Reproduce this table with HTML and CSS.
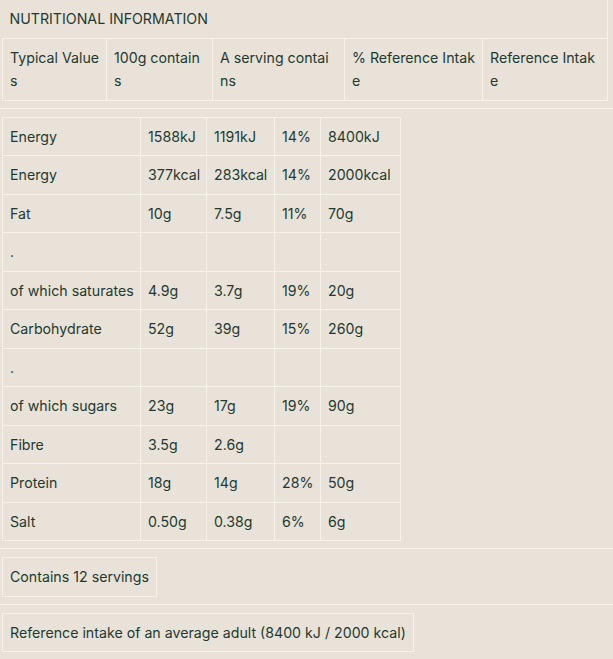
FILE: index.html
```html
<!DOCTYPE html>
<html lang="en">
<head>
<meta charset="utf-8">
<title>Nutritional information</title>
<link rel="stylesheet" href="styles.css">
</head>
<body>
<section class="block first">
  <table class="t1">
    <colgroup><col class="c1"><col class="c2"><col class="c3"><col class="c4"><col class="c5"></colgroup>
    <tr><th colspan="5" class="title">NUTRITIONAL INFORMATION</th></tr>
    <tr class="head">
      <td class="h1">Typical Values</td>
      <td>100g contains</td>
      <td>A serving contains</td>
      <td>% Reference Intake</td>
      <td>Reference Intake</td>
    </tr>
  </table>
</section>
<section class="block">
  <table class="t2">
    <colgroup><col class="d1"><col class="d2"><col class="d3"><col class="d4"><col class="d5"></colgroup>
    <tr><td>Energy</td><td>1588kJ</td><td>1191kJ</td><td>14%</td><td>8400kJ</td></tr>
    <tr><td>Energy</td><td>377kcal</td><td>283kcal</td><td>14%</td><td>2000kcal</td></tr>
    <tr><td>Fat</td><td>10g</td><td>7.5g</td><td>11%</td><td>70g</td></tr>
    <tr><td>.</td><td></td><td></td><td></td><td></td></tr>
    <tr><td>of which saturates</td><td>4.9g</td><td>3.7g</td><td>19%</td><td>20g</td></tr>
    <tr><td>Carbohydrate</td><td>52g</td><td>39g</td><td>15%</td><td>260g</td></tr>
    <tr><td>.</td><td></td><td></td><td></td><td></td></tr>
    <tr><td>of which sugars</td><td>23g</td><td>17g</td><td>19%</td><td>90g</td></tr>
    <tr><td>Fibre</td><td>3.5g</td><td>2.6g</td><td></td><td></td></tr>
    <tr><td>Protein</td><td>18g</td><td>14g</td><td>28%</td><td>50g</td></tr>
    <tr><td>Salt</td><td>0.50g</td><td>0.38g</td><td>6%</td><td>6g</td></tr>
  </table>
</section>
<section class="block">
  <div class="box">Contains 12 servings</div>
</section>
<section class="block last">
  <div class="box">Reference intake of an average adult (8400 kJ / 2000 kcal)</div>
</section>
</body>
</html>
```
FILE: styles.css
```css
html, body {
  margin: 0;
  padding: 0;
  background: #e8e2d9;
}
body {
  font-family: Inter, "Noto Sans", sans-serif;
  font-size: 14.2px;
  color: #1f3a30;
  line-height: 23.5px;
}
.block {
  border-bottom: 1px solid #f7f2ea;
  padding: 8px 0 7px 2px;
}
.block.first {
  padding-top: 0;
}
.block.last {
  border-bottom: none;
}
table {
  border-collapse: collapse;
  table-layout: fixed;
}
td, th {
  border: 1px solid #f7f2ea;
  padding: 7px 7px;
  text-align: left;
  vertical-align: top;
  font-weight: 400;
  word-break: break-all;
}
.t1 { width: 605px; }
.t1 .head .h1 { padding-right: 4px; }
.t1 .title {
  border-top: none;
  border-left: none;
  padding: 7px 7px;
}
.c1 { width: 104px; }
.c2 { width: 106px; }
.c3 { width: 132px; }
.c4 { width: 138px; }
.c5 { width: 125px; }
.t2 { width: 398px; }
.t2 td { white-space: nowrap; word-break: normal; }
.d1 { width: 138px; }
.d2 { width: 66px; }
.d3 { width: 68px; }
.d4 { width: 46px; }
.d5 { width: 80px; }
.box {
  display: inline-block;
  border: 1px solid #f7f2ea;
  padding: 7px 7px;
}
```
